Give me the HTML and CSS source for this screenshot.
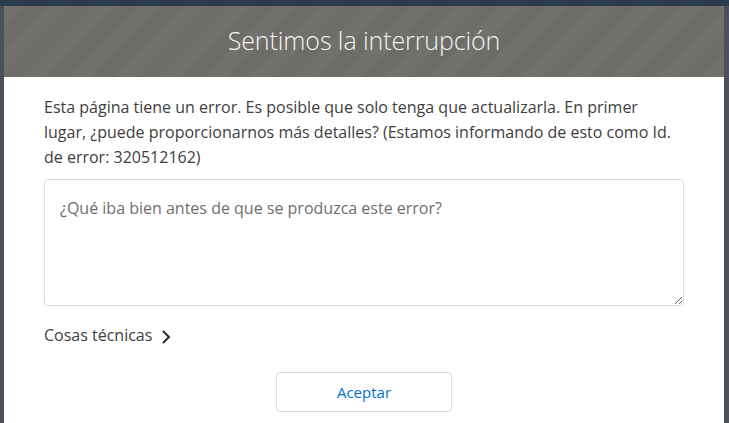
FILE: index.html
```html
<!DOCTYPE html>
<html lang="es">
<head>
<meta charset="utf-8">
<link rel="stylesheet" href="styles.css">
</head>
<body>
<div class="backdrop">
  <div class="modal">
    <header class="modal-header">
      <h1 class="title">Sentimos la interrupción</h1>
    </header>
    <div class="modal-body">
      <p class="message">Esta página tiene un error. Es posible que solo tenga que actualizarla. En primer lugar, ¿puede proporcionarnos más detalles? (Estamos informando de esto como Id. de error: 320512162)</p>
      <textarea class="details" placeholder="¿Qué iba bien antes de que se produzca este error?"></textarea>
      <div class="tech">
        <span>Cosas técnicas</span>
        <svg class="chev" width="10" height="16" viewBox="0 0 10 16"><path d="M2 2 L8 8 L2 14" fill="none" stroke="#2b2b2b" stroke-width="2"/></svg>
      </div>
      <div class="actions">
        <button class="btn">Aceptar</button>
      </div>
    </div>
  </div>
</div>
</body>
</html>
```
FILE: styles.css
```css
html, body {
  margin: 0;
  padding: 0;
  height: 100%;
  overflow: hidden;
}
body {
  background: #2d3b4f;
  font-family: "Open Sans", "Liberation Sans", sans-serif;
}
.backdrop {
  height: 100%;
  background: #4b515c;
  padding: 6px 5px 0 4px;
  box-sizing: border-box;
  box-shadow: inset 0 6px 0 #2d3b4f;
}
.modal {
  border-radius: 4px 4px 0 0;
  overflow: hidden;
  background: #fff;
  height: 100%;
}
.modal-header {
  height: 71px;
  box-sizing: border-box;
  padding-bottom: 3px;
  background-color: #6d6c67;
  background-image: repeating-linear-gradient(-45deg, rgba(255,255,255,0.03) 0 16px, rgba(255,255,255,0) 16px 32px);
  display: flex;
  align-items: center;
  justify-content: center;
}
.title {
  margin: 0;
  font-weight: 300;
  font-size: 25px;
  color: #f4f4f2;
  letter-spacing: -0.1px;
}
.modal-body {
  padding: 18px 40px 0 40px;
}
.message {
  margin: 0 0 9px;
  font-size: 16px;
  line-height: 25px;
  color: #3e3e3c;
}
.details {
  display: block;
  width: 100%;
  box-sizing: border-box;
  height: 127px;
  border: 1px solid #d8dde6;
  border-radius: 4px;
  padding: 18px 15px;
  font-family: inherit;
  font-size: 16px;
  line-height: 20px;
  resize: vertical;
  margin: 0;
}
.details::placeholder {
  color: #706e6b;
}
.tech {
  display: flex;
  align-items: center;
  gap: 9px;
  margin-top: 18px;
  font-size: 16px;
  color: #3e3e3c;
  height: 22px;
}
.chev {
  margin-top: 3px;
}
.actions {
  display: flex;
  justify-content: center;
  margin-top: 26px;
}
.btn {
  width: 176px;
  height: 40px;
  border: 1px solid #d8dde6;
  border-radius: 4px;
  background: #fff;
  color: #0070d2;
  font-family: inherit;
  font-size: 15px;
}
```
